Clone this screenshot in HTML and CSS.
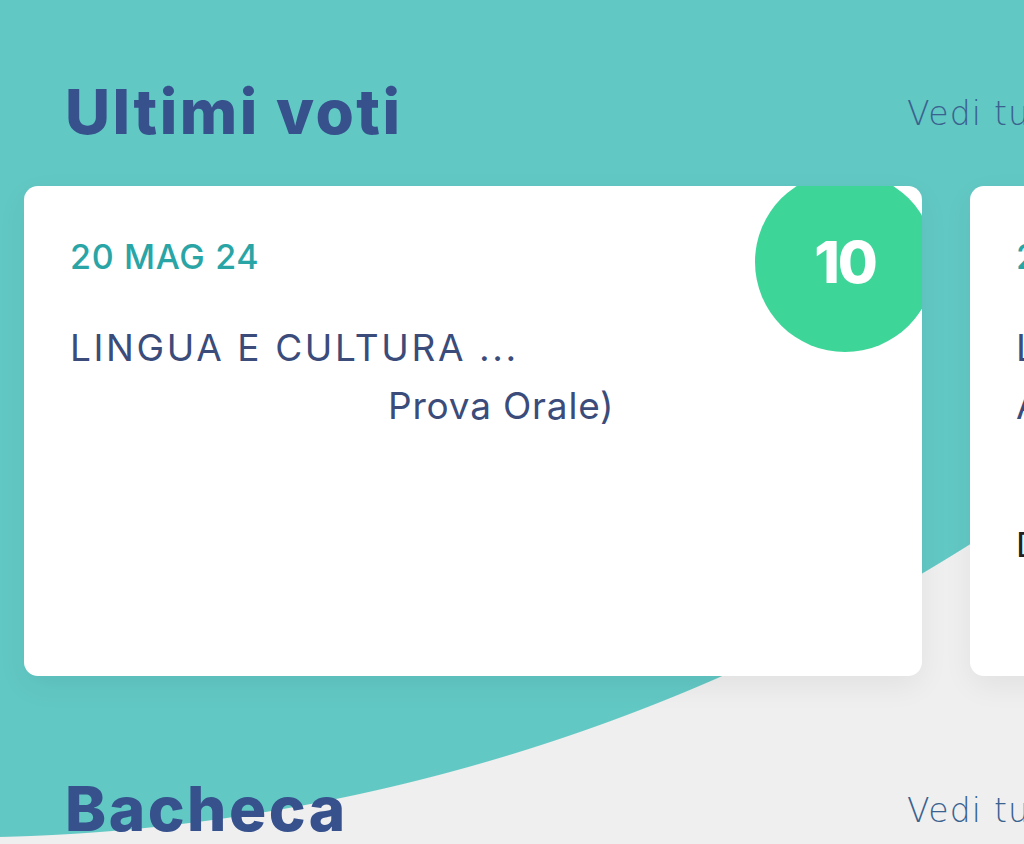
FILE: index.html
```html
<!DOCTYPE html>
<html lang="it">
<head>
    <meta charset="UTF-8">
    <meta name="viewport" content="width=device-width, initial-scale=1.0">
    <title>Home - Registro</title>
    <link rel="stylesheet" href="styles.css">
</head>
<body>
    <main class="home">
        <section class="block">
            <div class="block-head">
                <h2>Ultimi voti</h2>
                <a href="#" class="more">Vedi tutti</a>
            </div>

            <div class="cards">
                <div class="card">
                    <div class="grade">10</div>
                    <div class="date">20 MAG 24</div>
                    <div class="subject">
                        <div class="subject-name">LINGUA E CULTURA ...</div>
                        <div class="kind">Prova Orale)</div>
                    </div>
                </div>

                <div class="card">
                    <div class="grade">9</div>
                    <div class="date">20 MAG 24</div>
                    <div class="subject">
                        <div class="subject-name">LINGUA E CULTURA ...</div>
                        <div class="subject-name">ARTE</div>
                    </div>
                    <div class="note">Descrizione</div>
                </div>
            </div>
        </section>

        <section class="block block-next">
            <div class="block-head">
                <h2>Bacheca</h2>
                <a href="#" class="more">Vedi tutti</a>
            </div>
        </section>
    </main>
</body>
</html>
```

FILE: styles.css
```css
html, body {
    margin: 0;
    padding: 0;
}

body {
    width: 1024px;
    height: 844px;
    overflow: hidden;
    font-family: Inter, "Noto Sans", sans-serif;
    /* big teal circle behind the top of the page */
    background: radial-gradient(circle 1904px at -45px -1066px, #62c8c4 1903px, #efefef 1904px);
}

.block {
    padding-top: 81px;
}

.block-next {
    padding-top: 102px;
}

.block-head {
    display: grid;
    grid-template-columns: 842px auto;
    align-items: center;
    padding-left: 65px;
}

.block-head h2 {
    margin: 0;
    font-size: 62px;
    line-height: 1;
    font-weight: 800;
    letter-spacing: 2.5px;
    color: #36518c;
}

.more {
    margin-top: 3px;
    font-family: "DejaVu Sans", sans-serif;
    font-size: 33px;
    line-height: 1;
    font-weight: 200;
    letter-spacing: 1.2px;
    color: #3a628f;
    text-decoration: none;
    white-space: nowrap;
}

.cards {
    display: flex;
    gap: 48px;
    margin-top: 43px;
    padding-left: 24px;
}

.card {
    position: relative;
    flex: 0 0 898px;
    height: 490px;
    box-sizing: border-box;
    padding: 54px 46px 0;
    background-color: #fff;
    border-radius: 14px;
    overflow: hidden;
    box-shadow: 0 10px 30px rgba(0, 0, 0, 0.06);
}

.grade {
    position: absolute;
    top: -14px;
    right: -13px;
    width: 180px;
    height: 180px;
    border-radius: 50%;
    background-color: #3dd598;
    color: #fff;
    display: flex;
    align-items: center;
    justify-content: center;
    font-size: 58px;
    font-weight: 800;
    letter-spacing: -2px;
}

.date {
    font-size: 34px;
    line-height: 1;
    font-weight: 500;
    letter-spacing: 0.7px;
    color: #2aa5a6;
}

.subject {
    margin-top: 45px;
    font-size: 37px;
    line-height: 58px;
    color: #3b4c7a;
}

.subject-name {
    letter-spacing: 2.6px;
}

.kind {
    padding-left: 318px;
    letter-spacing: 0.8px;
}

.note {
    margin-top: 89px;
    font-size: 34px;
    color: #222;
}
```
